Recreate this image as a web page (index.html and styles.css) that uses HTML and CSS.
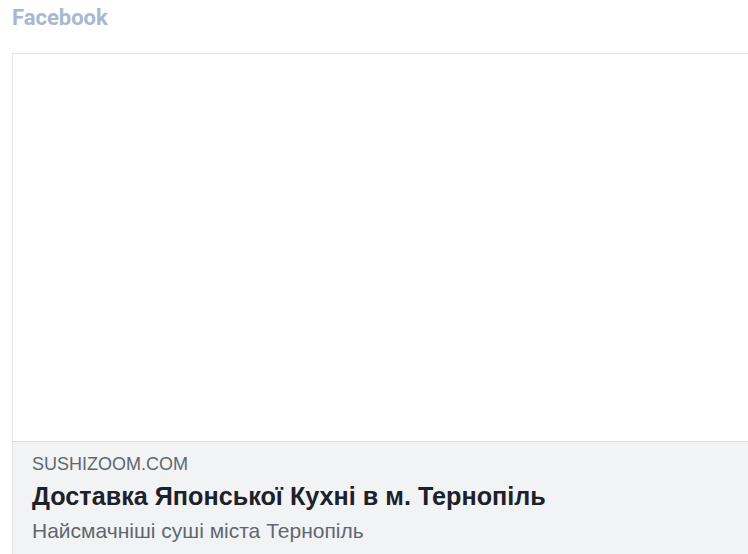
FILE: index.html
```html
<!DOCTYPE html>
<html lang="uk">
<head>
<meta charset="utf-8">
<title>Facebook preview</title>
<link rel="stylesheet" href="styles.css">
</head>
<body>
  <div class="preview">
    <div class="network">Facebook</div>
    <div class="card">
      <div class="card-image"></div>
      <div class="card-body">
        <div class="card-domain">SUSHIZOOM.COM</div>
        <div class="card-title">Доставка Японської Кухні в м. Тернопіль</div>
        <div class="card-desc">Найсмачніші суші міста Тернопіль</div>
      </div>
    </div>
  </div>
</body>
</html>
```

FILE: styles.css
```css
html, body {
  margin: 0;
  padding: 0;
  background: #ffffff;
  overflow: hidden;
}

body {
  font-family: "Liberation Sans", Arial, sans-serif;
}

.preview {
  padding: 5px 0 0 12px;
}

.network {
  font-family: Roboto, "Liberation Sans", sans-serif;
  font-weight: 700;
  font-size: 22px;
  line-height: 26px;
  color: #a8b8d0;
}

/* link card is wider than the panel; its right edge is clipped */
.card {
  margin-top: 22px;
  border-top: 1px solid #e1e3e7;
  border-left: 1px solid #e1e3e7;
}

.card-image {
  height: 387px;
  background: #ffffff;
}

.card-body {
  background: #f2f3f5;
  border-top: 1px solid #dadde1;
  padding: 11px 19px 10px;
}

.card-domain {
  font-size: 18px;
  line-height: 22px;
  color: #606770;
  white-space: nowrap;
}

.card-title {
  margin-top: 6px;
  font-size: 25.2px;
  font-weight: 700;
  line-height: 30px;
  color: #1d2129;
  white-space: nowrap;
}

.card-desc {
  margin-top: 7px;
  font-size: 21px;
  line-height: 26px;
  color: #606770;
  white-space: nowrap;
}
```
